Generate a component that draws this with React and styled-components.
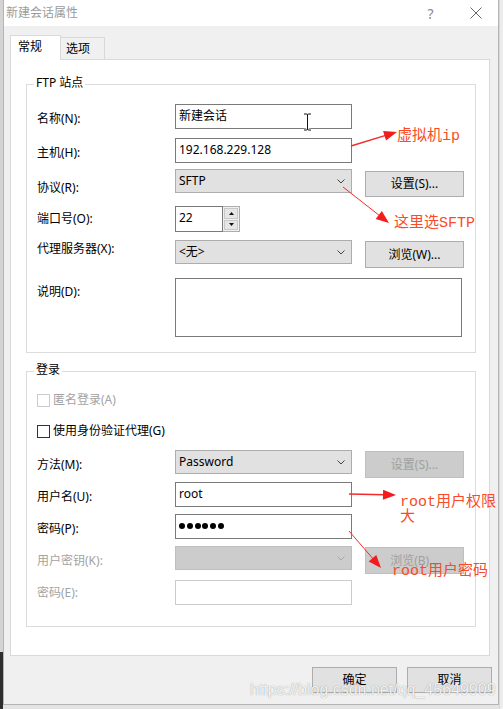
import React from 'react';
import styled, { createGlobalStyle } from 'styled-components';

const GlobalStyle = createGlobalStyle`
  html, body {
    margin: 0;
    padding: 0;
  }
  body {
    font-family: "Noto Sans", "Noto Sans CJK SC", sans-serif;
    font-size: 12px;
    color: #000;
    background: #e6e6e6;
  }
`;

const Screen = styled.div`
  position: relative;
  display: flex;
  align-items: flex-start;
  width: 503px;
  height: 709px;
  overflow: hidden;
  background: #e4e4e4;
`;

const BackEdge = styled.div`
  flex: none;
  width: ${(p) => p.$w}px;
  height: 100%;
  background: ${(p) => p.$bg};
`;

const Window = styled.div`
  flex: none;
  width: 496px;
  height: 705px;
  box-sizing: border-box;
  display: flex;
  flex-direction: column;
  background: #f0f0f0;
  border: 1px solid #b4b4b4;
  border-top: none;
`;

const TitleBar = styled.div`
  height: 26px;
  flex: none;
  display: flex;
  align-items: center;
  background: #fff;
  padding-left: 2px;
`;

const Title = styled.div`
  color: #9b9b9b;
  font-size: 12px;
  line-height: 16px;
`;

const TitleButton = styled.div`
  width: 45px;
  height: 26px;
  display: flex;
  align-items: center;
  justify-content: center;
  color: #8a8a8a;
  font-size: 14px;
  margin-left: ${(p) => (p.$first ? 'auto' : '0')};
`;

const Body = styled.div`
  flex: 1;
  display: flex;
  flex-direction: column;
  padding: 9px 8px 0 6px;
`;

const TabList = styled.div`
  display: flex;
  align-items: flex-end;
  height: 24px;
`;

const Tab = styled.div`
  position: relative;
  z-index: 1;
  box-sizing: border-box;
  width: ${(p) => (p.$active ? 51 : 44)}px;
  height: ${(p) => (p.$active ? 25 : 22)}px;
  margin-bottom: ${(p) => (p.$active ? -1 : 0)}px;
  padding: ${(p) => (p.$active ? '3px 0 0 7px' : '3px 0 0 5px')};
  line-height: 16px;
  background: ${(p) => (p.$active ? '#fff' : '#f0f0f0')};
  border: 1px solid #d9d9d9;
  border-bottom: none;
  border-left: ${(p) => (p.$active ? '1px solid #d9d9d9' : 'none')};
`;

const Panel = styled.div`
  height: 597px;
  box-sizing: border-box;
  display: flex;
  flex-direction: column;
  background: #fff;
  border: 1px solid #d9d9d9;
  padding: 24px 13px 0 15px;
`;

const Group = styled.div`
  position: relative;
  border: 1px solid #dcdcdc;
  margin-top: ${(p) => p.$mt || 0}px;
  padding: ${(p) => p.$pt}px 0 ${(p) => p.$pb}px 10px;
`;

const Legend = styled.div`
  position: absolute;
  top: -10px;
  left: 7px;
  padding: 0 2px;
  background: #fff;
  line-height: 16px;
`;

const Row = styled.div`
  display: flex;
  align-items: flex-start;
  margin-top: ${(p) => p.$mt || 0}px;
`;

const Label = styled.div`
  flex: none;
  width: 138px;
  padding-top: ${(p) => p.$dy}px;
  line-height: 16px;
  color: ${(p) => (p.$muted ? '#a3a3a3' : '#000')};
`;

const TextBox = styled.div`
  flex: none;
  box-sizing: border-box;
  width: ${(p) => p.$w || 177}px;
  height: ${(p) => p.$h || 25}px;
  display: flex;
  align-items: center;
  padding: 0 0 2px 3px;
  background: #fff;
  border: 1px solid ${(p) => (p.$disabled ? '#cccccc' : '#7a7a7a')};
  line-height: 16px;
`;

const Select = styled.div`
  flex: none;
  box-sizing: border-box;
  width: 177px;
  height: 24px;
  display: flex;
  align-items: center;
  justify-content: space-between;
  padding: 0 6px 0 3px;
  background: ${(p) => (p.$disabled ? '#cccccc' : '#e1e1e1')};
  border: 1px solid ${(p) => (p.$disabled ? '#bfbfbf' : '#adadad')};
  line-height: 16px;
`;

const Button = styled.div`
  flex: none;
  box-sizing: border-box;
  width: ${(p) => p.$w || 99}px;
  height: ${(p) => p.$h || 27}px;
  margin-left: ${(p) => (p.$ml === undefined ? 13 : p.$ml)}px;
  margin-top: ${(p) => p.$dy || 0}px;
  display: flex;
  align-items: center;
  justify-content: center;
  background: ${(p) => (p.$disabled ? '#cccccc' : '#e1e1e1')};
  border: 1px solid ${(p) => (p.$disabled ? '#bfbfbf' : '#adadad')};
  color: ${(p) => (p.$disabled ? '#a0a0a0' : '#000')};
  line-height: 16px;
`;

const NumberBox = styled.div`
  display: flex;
  height: 26px;
`;

const SpinColumn = styled.div`
  box-sizing: border-box;
  width: 17px;
  height: 26px;
  display: flex;
  flex-direction: column;
  gap: 1px;
  padding: 1px;
  background: #f0f0f0;
  border: 1px solid #adadad;
  border-left: none;
`;

const SpinButton = styled.div`
  flex: 1;
  display: flex;
  align-items: center;
  justify-content: center;
  background: #e6e6e6;
  border: 1px solid #c8c8c8;
`;

const TextArea = styled.div`
  box-sizing: border-box;
  width: 287px;
  height: 59px;
  background: #fff;
  border: 1px solid #7a7a7a;
`;

const CheckRow = styled.div`
  display: flex;
  align-items: center;
  gap: 3px;
  height: 16px;
  margin-top: ${(p) => p.$mt || 0}px;
  color: ${(p) => (p.$muted ? '#a3a3a3' : '#000')};
  line-height: 16px;
`;

const CheckBox = styled.div`
  box-sizing: border-box;
  width: 13px;
  height: 13px;
  background: #fff;
  border: 1px solid ${(p) => (p.$muted ? '#cccccc' : '#333')};
`;

const Dots = styled.div`
  display: flex;
  gap: 1.8px;
`;

const Dot = styled.span`
  width: 6px;
  height: 6px;
  border-radius: 50%;
  background: #000;
`;

const Footer = styled.div`
  display: flex;
  justify-content: flex-end;
  gap: 10px;
  margin: 11px -2px 0 0;
`;

const Overlay = styled.svg`
  position: absolute;
  left: 0;
  top: 0;
  pointer-events: none;
`;

const Note = styled.div`
  position: absolute;
  left: ${(p) => p.$x}px;
  top: ${(p) => p.$y}px;
  color: #f94b29;
  font-family: "Liberation Mono", "Noto Sans CJK SC", monospace;
  font-size: 15px;
  line-height: 15px;
  white-space: nowrap;
`;

const Watermark = styled.div`
  position: absolute;
  left: 250px;
  top: 680px;
  font-family: "Liberation Sans", sans-serif;
  font-size: 16px;
  line-height: 20px;
  color: rgba(255, 255, 255, 0.9);
  text-shadow: 0 0 1px rgba(90, 90, 90, 0.7);
  white-space: nowrap;
`;

const Caret = styled.svg`
  position: absolute;
  left: 303px;
  top: 113px;
`;

const Chevron = ({ muted }) => (
  <svg width="8" height="5" viewBox="0 0 8 5">
    <path d="M0.5 0.5 L4 4 L7.5 0.5" fill="none" stroke={muted ? '#a8a8a8' : '#444'} strokeWidth="1" />
  </svg>
);

const arrows = [
  { from: [351, 146], to: [397, 132], w: 1.4 },
  { from: [343, 187], to: [389, 223], w: 1 },
  { from: [349, 494], to: [396, 495], w: 1.4 },
  { from: [349, 531], to: [381, 568], w: 1 },
];

function arrowParts({ from, to }) {
  const dx = to[0] - from[0];
  const dy = to[1] - from[1];
  const len = Math.hypot(dx, dy);
  const ux = dx / len;
  const uy = dy / len;
  const bx = to[0] - ux * 13;
  const by = to[1] - uy * 13;
  const px = -uy * 5;
  const py = ux * 5;
  return {
    line: [from[0], from[1], bx + ux * 2, by + uy * 2],
    head: `${to[0]},${to[1]} ${bx + px},${by + py} ${bx - px},${by - py}`,
  };
}

const App = () => {
  return (
    <>
      <GlobalStyle />
      <Screen>
        <BackEdge $w={3} $bg="linear-gradient(to bottom, #d4d4d4 0 652px, #2e2e2e 652px)" />
        <Window>
          <TitleBar>
            <Title>新建会话属性</Title>
            <TitleButton $first>?</TitleButton>
            <TitleButton>
              <svg width="12" height="12" viewBox="0 0 12 12">
                <path d="M0.5 0.5 L11.5 11.5 M11.5 0.5 L0.5 11.5" stroke="#666" strokeWidth="1" />
              </svg>
            </TitleButton>
          </TitleBar>
          <Body>
            <TabList>
              <Tab $active>常规</Tab>
              <Tab>选项</Tab>
            </TabList>
            <Panel>
              <Group $pt={19} $pb={15}>
                <Legend>FTP 站点</Legend>
                <Row>
                  <Label $dy={7}>名称(N):</Label>
                  <TextBox>新建会话</TextBox>
                </Row>
                <Row $mt={9}>
                  <Label $dy={7}>主机(H):</Label>
                  <TextBox>192.168.229.128</TextBox>
                </Row>
                <Row $mt={6}>
                  <Label $dy={11}>协议(R):</Label>
                  <Select>
                    SFTP
                    <Chevron />
                  </Select>
                  <Button $dy={2} $h={26}>设置(S)...</Button>
                </Row>
                <Row $mt={9}>
                  <Label $dy={5}>端口号(O):</Label>
                  <NumberBox>
                    <TextBox $w={48} $h={26}>22</TextBox>
                    <SpinColumn>
                      <SpinButton>
                        <svg width="5" height="3" viewBox="0 0 5 3"><path d="M0 3 L2.5 0 L5 3 Z" fill="#111" /></svg>
                      </SpinButton>
                      <SpinButton>
                        <svg width="5" height="3" viewBox="0 0 5 3"><path d="M0 0 L5 0 L2.5 3 Z" fill="#111" /></svg>
                      </SpinButton>
                    </SpinColumn>
                  </NumberBox>
                </Row>
                <Row $mt={8}>
                  <Label $dy={1}>代理服务器(X):</Label>
                  <Select>
                    &lt;无&gt;
                    <Chevron />
                  </Select>
                  <Button $dy={1}>浏览(W)...</Button>
                </Row>
                <Row $mt={10}>
                  <Label $dy={6}>说明(D):</Label>
                  <TextArea />
                </Row>
              </Group>

              <Group $mt={18} $pt={20} $pb={21}>
                <Legend>登录</Legend>
                <CheckRow $muted>
                  <CheckBox $muted />
                  匿名登录(A)
                </CheckRow>
                <CheckRow $mt={15}>
                  <CheckBox />
                  使用身份验证代理(G)
                </CheckRow>
                <Row $mt={11}>
                  <Label $dy={7}>方法(M):</Label>
                  <Select>
                    Password
                    <Chevron />
                  </Select>
                  <Button $dy={1} $disabled>设置(S)...</Button>
                </Row>
                <Row $mt={4}>
                  <Label $dy={7}>用户名(U):</Label>
                  <TextBox>root</TextBox>
                </Row>
                <Row $mt={7}>
                  <Label $dy={7}>密码(P):</Label>
                  <TextBox>
                    <Dots>
                      {Array.from({ length: 6 }).map((_, i) => (
                        <Dot key={i} />
                      ))}
                    </Dots>
                  </TextBox>
                </Row>
                <Row $mt={7}>
                  <Label $dy={7} $muted>用户密钥(K):</Label>
                  <Select $disabled>
                    <span />
                    <Chevron muted />
                  </Select>
                  <Button $dy={1} $disabled>浏览(B)...</Button>
                </Row>
                <Row $mt={6}>
                  <Label $dy={5} $muted>密码(E):</Label>
                  <TextBox $disabled />
                </Row>
              </Group>
            </Panel>
            <Footer>
              <Button $w={85} $h={26} $ml={0}>确定</Button>
              <Button $w={85} $h={26} $ml={0}>取消</Button>
            </Footer>
          </Body>
        </Window>
        <BackEdge $w={4} $bg="linear-gradient(to right, #d8d8d8 0 1px, #ececec 1px)" />

        <Caret width="9" height="18" viewBox="0 0 9 18">
          <path d="M1 1 H3.5 M5.5 1 H8 M4.5 1.5 V16.5 M1 17 H3.5 M5.5 17 H8" stroke="#fff" strokeWidth="2.5" fill="none" />
          <path d="M1 1 H3.5 Q4.5 1 4.5 2 V16 Q4.5 17 3.5 17 H1 M8 1 H5.5 Q4.5 1 4.5 2 M4.5 16 Q4.5 17 5.5 17 H8" stroke="#111" strokeWidth="1" fill="none" />
        </Caret>

        <Overlay width="503" height="709" viewBox="0 0 503 709">
          {arrows.map((a, i) => {
            const { line, head } = arrowParts(a);
            return (
              <g key={i}>
                <line x1={line[0]} y1={line[1]} x2={line[2]} y2={line[3]} stroke="#f42a2a" strokeWidth={a.w} />
                <polygon points={head} fill="#f21c1c" />
              </g>
            );
          })}
        </Overlay>

        <Note $x={397} $y={129}>虚拟机ip</Note>
        <Note $x={394} $y={216}>这里选SFTP</Note>
        <Note $x={400} $y={495}>
          root用户权限
          <br />
          大
        </Note>
        <Note $x={392} $y={564}>root用户密码</Note>

        <Watermark>https://blog.csdn.net/qq_45649909</Watermark>
      </Screen>
    </>
  );
};

export default App;
